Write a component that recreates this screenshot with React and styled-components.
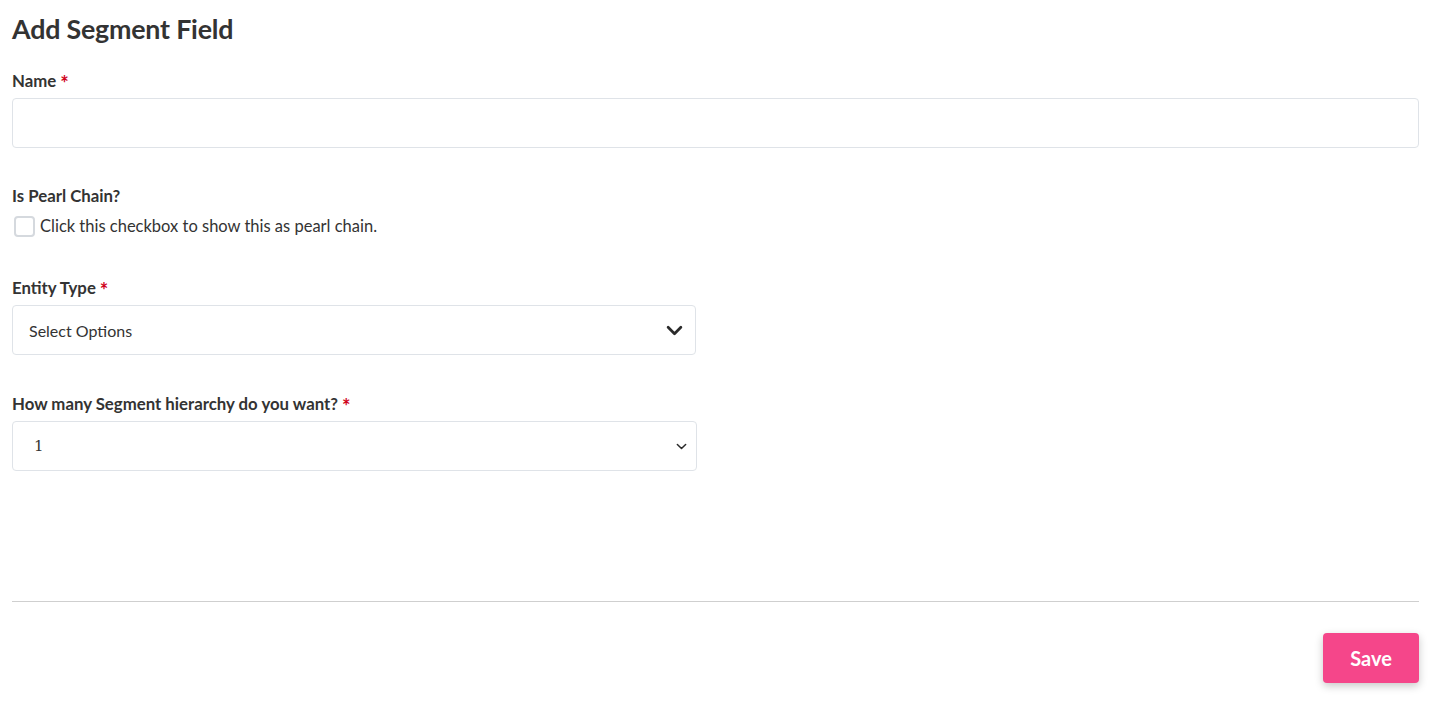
import React from 'react'
import styled, { createGlobalStyle } from 'styled-components'

const Global = createGlobalStyle`
body {
  margin: 0;
  background: #fff;
  font-family: "Lato", "Open Sans", sans-serif;
  color: #333;
}
* { box-sizing: border-box; }
`

const Page = styled.div`
padding: 13px 16px 20px 12px;
`
const Title = styled.h2`
margin: 0 0 24px;
font-size: 26.8px;
line-height: 32px;
font-weight: 700;
color: #333;
letter-spacing: -0.2px;
`
const Group = styled.div`
margin-bottom: ${props => props.gap || "36px"};
`
const Label = styled.label`
display: block;
font-size: 16.8px;
line-height: 24px;
font-weight: 700;
color: #333;
margin-bottom: ${props => props.tight ? "0" : "5px"};
`
const Star = styled.span`
display: inline-block;
color: #d0021b;
margin-left: 4px;
font-size: 20px;
line-height: 0;
transform: translateY(4px);
`
const TextInput = styled.input`
display: block;
width: 100%;
height: 50px;
border: 1px solid #dfe3e8;
border-radius: 4px;
padding: 0 16px;
font-family: inherit;
font-size: 15px;
outline: none;
`
const CheckRow = styled.label`
display: flex;
align-items: center;
gap: 5px;
height: 24px;
margin-top: 6px;
font-size: 16.5px;
color: #333;
`
const Box = styled.span`
width: 21px;
height: 21px;
margin-left: 2px;
border: 2px solid #d5d9de;
border-radius: 4px;
background: #fff;
`
const SelectBox = styled.div`
display: flex;
align-items: center;
justify-content: space-between;
width: ${props => props.width || "684px"};
height: 50px;
border: 1px solid #dfe3e8;
border-radius: 4px;
padding: ${props => props.native ? "0 9px 0 21px" : "0 12px 0 16px"};
font-size: ${props => props.native ? "15px" : "16px"};
font-family: ${props => props.native ? '"DejaVu Serif", serif' : "inherit"};
color: #333;
`
const Divider = styled.hr`
margin: 130px 0 31px;
border: 0;
border-top: 1px solid #cfcfcf;
`
const Footer = styled.div`
display: flex;
justify-content: flex-end;
`
const SaveButton = styled.button`
width: 96px;
height: 50px;
border: 0;
border-radius: 4px;
background: #f5468a;
color: #fff;
font-family: inherit;
font-size: 20px;
font-weight: 700;
box-shadow: 0 3px 8px rgba(0, 0, 0, 0.22);
cursor: pointer;
`

const Chevron = ({ size = 16, weight = 3 }) => (
  <svg width={size} height={size} viewBox="0 0 16 16" fill="none">
    <path d="M2 5l6 6 6-6" stroke="#2b2b2b" strokeWidth={weight} strokeLinecap="round" strokeLinejoin="round" />
  </svg>
)

export default function App() {
  return (
    <Page>
      <Global />
      <Title>Add Segment Field</Title>
      <Group>
        <Label>Name<Star>*</Star></Label>
        <TextInput type="text" />
      </Group>
      <Group gap="38px">
        <Label tight>Is Pearl Chain?</Label>
        <CheckRow>
          <Box />
          Click this checkbox to show this as pearl chain.
        </CheckRow>
      </Group>
      <Group gap="37px">
        <Label>Entity Type<Star>*</Star></Label>
        <SelectBox>
          <span>Select Options</span>
          <Chevron size={17} weight={2.6} />
        </SelectBox>
      </Group>
      <Group gap="0">
        <Label>How many Segment hierarchy do you want?<Star>*</Star></Label>
        <SelectBox native width="685px">
          <span>1</span>
          <Chevron size={11} weight={2.2} />
        </SelectBox>
      </Group>
      <Divider />
      <Footer>
        <SaveButton>Save</SaveButton>
      </Footer>
    </Page>
  )
}
